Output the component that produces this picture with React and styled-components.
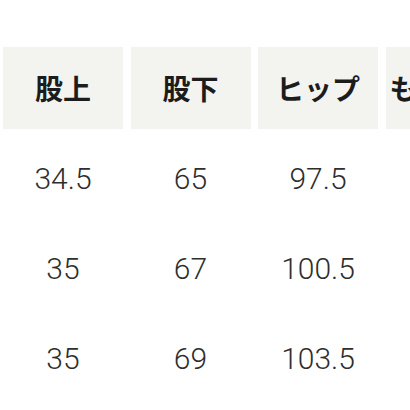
import styled, { createGlobalStyle } from "styled-components"

const GlobalStyle = createGlobalStyle`
  html, body {
    margin: 0;
    padding: 0;
    background: #ffffff;
    overflow: hidden;
  }
`

const headers = ["股上", "股下", "ヒップ", "もも周り"]

const rows = [
  ["34.5", "65", "97.5", "58"],
  ["35", "67", "100.5", "60"],
  ["35", "69", "103.5", "62"],
]

export default function App() {
  return (
    <>
      <GlobalStyle />
      <Page>
        <SizeTable>
          {headers.map((h) => (
            <HeadCell key={h}>{h}</HeadCell>
          ))}
          {rows.map((row, i) =>
            row.map((v, j) => <ValueCell key={i + "-" + j}>{v}</ValueCell>)
          )}
        </SizeTable>
      </Page>
    </>
  )
}

const Page = styled.div`
  width: 410px;
  height: 410px;
  overflow: hidden;
  padding: 47px 0 0 3px;
  box-sizing: border-box;
`

const SizeTable = styled.div`
  display: grid;
  grid-template-columns: repeat(4, 120px);
  grid-auto-rows: 82px;
  column-gap: 7.5px;
  row-gap: 8px;
  width: max-content;
`

const HeadCell = styled.div`
  display: flex;
  align-items: center;
  justify-content: center;
  background: #f3f3f0;
  color: #1c1c1c;
  font-family: "Noto Sans CJK JP", sans-serif;
  font-weight: 700;
  font-size: 28px;
  white-space: nowrap;
`

const ValueCell = styled.div`
  display: flex;
  align-items: center;
  justify-content: center;
  color: #2e2e2e;
  font-family: Roboto, "Noto Sans", sans-serif;
  font-weight: 300;
  font-size: 30px;
`
